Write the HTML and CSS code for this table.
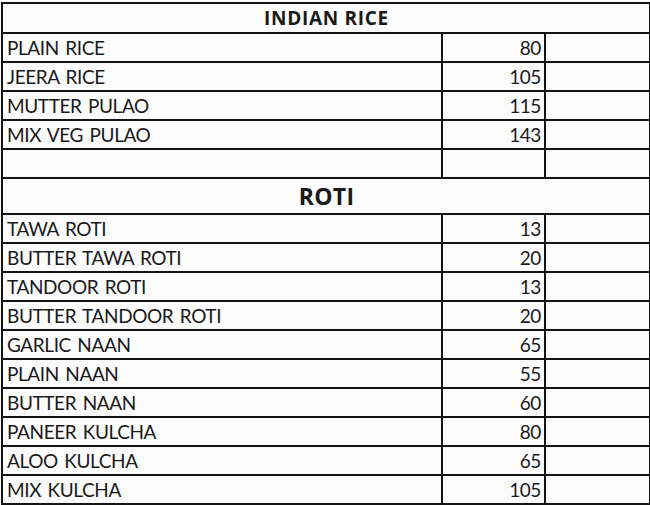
FILE: index.html
```html
<!DOCTYPE html>
<html>
<head>
<meta charset="utf-8">
<link rel="stylesheet" href="styles.css">
</head>
<body>
<table class="menu">
  <colgroup>
    <col class="c-name">
    <col class="c-price">
    <col class="c-extra">
  </colgroup>
  <tr class="head"><th colspan="3">INDIAN RICE</th></tr>
  <tr><td>PLAIN RICE</td><td class="num">80</td><td></td></tr>
  <tr><td>JEERA RICE</td><td class="num">105</td><td></td></tr>
  <tr><td>MUTTER PULAO</td><td class="num">115</td><td></td></tr>
  <tr><td>MIX VEG PULAO</td><td class="num">143</td><td></td></tr>
  <tr><td></td><td class="num"></td><td></td></tr>
  <tr class="head big"><th colspan="3">ROTI</th></tr>
  <tr><td>TAWA ROTI</td><td class="num">13</td><td></td></tr>
  <tr><td>BUTTER TAWA ROTI</td><td class="num">20</td><td></td></tr>
  <tr><td>TANDOOR ROTI</td><td class="num">13</td><td></td></tr>
  <tr><td>BUTTER TANDOOR ROTI</td><td class="num">20</td><td></td></tr>
  <tr><td>GARLIC NAAN</td><td class="num">65</td><td></td></tr>
  <tr><td>PLAIN NAAN</td><td class="num">55</td><td></td></tr>
  <tr><td>BUTTER NAAN</td><td class="num">60</td><td></td></tr>
  <tr><td>PANEER KULCHA</td><td class="num">80</td><td></td></tr>
  <tr><td>ALOO KULCHA</td><td class="num">65</td><td></td></tr>
  <tr><td>MIX KULCHA</td><td class="num">105</td><td></td></tr>
</table>
</body>
</html>
```

FILE: styles.css
```css
html, body {
  margin: 0;
  padding: 0;
  background: #fcfcfc;
}
body {
  padding: 2px 0 0 1px;
  font-family: "Lato", "Open Sans", sans-serif;
  color: #1a1a1a;
}
.menu {
  border-collapse: collapse;
  table-layout: fixed;
  width: 648px;
}
.c-name { width: 440px; }
.c-price { width: 103px; }
.c-extra { width: 105px; }
.menu td, .menu th {
  border: 2px solid #141414;
  padding: 0 3px 0 4px;
  height: 27px;
  font-size: 19px;
  line-height: 26px;
  vertical-align: bottom;
  white-space: nowrap;
  letter-spacing: -0.4px;
  word-spacing: 2px;
}
.menu td.num {
  text-align: right;
}
.menu .head th {
  height: 28px;
  font-family: "Open Sans", "Lato", sans-serif;
  font-weight: 700;
  font-size: 19px;
  letter-spacing: 0.7px;
  word-spacing: 0;
  line-height: 28px;
  text-align: center;
  vertical-align: middle;
}
.menu .head.big th {
  height: 34px;
  font-size: 23px;
  letter-spacing: 0.3px;
  line-height: 34px;
}
```
